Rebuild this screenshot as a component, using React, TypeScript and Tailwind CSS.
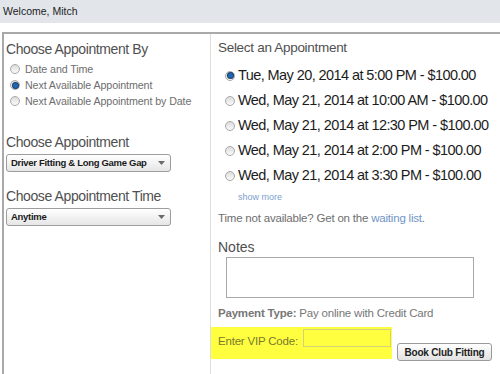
const sans = { fontFamily: '"Liberation Sans", Arial, sans-serif' };

function Radio({ checked = false }: { checked?: boolean }) {
  return (
    <span className="w-[10px] h-[10px] rounded-full border border-[#a8a8a8] bg-gradient-to-b from-[#dcdcdc] to-[#fafafa] flex items-center justify-center shrink-0">
      {checked && <span className="w-[5px] h-[5px] rounded-full bg-[#1f66b3] ring-1 ring-[#1a3f6a]" />}
    </span>
  );
}

function Select({ label }: { label: string }) {
  return (
    <div className="ml-[2px] w-[165px] h-[18px] border border-[#9d9d9d] rounded-[3px] bg-gradient-to-b from-white to-[#e6e6e6] flex items-center justify-between pl-[4px] pr-[5px]">
      <span className="text-[9.5px] font-bold tracking-[-0.3px] text-[#1a1a1a]">{label}</span>
      <svg width="7" height="4" viewBox="0 0 7 4">
        <path d="M0 0h7L3.5 4z" fill="#6b6b6b" />
      </svg>
    </div>
  );
}

const slots = [
  'Tue, May 20, 2014 at 5:00 PM - $100.00',
  'Wed, May 21, 2014 at 10:00 AM - $100.00',
  'Wed, May 21, 2014 at 12:30 PM - $100.00',
  'Wed, May 21, 2014 at 2:00 PM - $100.00',
  'Wed, May 21, 2014 at 3:30 PM - $100.00',
];

export default function App() {
  return (
    <div className="w-[500px] h-[374px] bg-white overflow-hidden" style={sans}>
      <div className="h-[23px] bg-[#e2e6eb] pl-[3px] flex items-center text-[10.5px] text-[#222]">
        Welcome, Mitch
      </div>

      <div className="mt-[9px] ml-[2px] h-[400px] border-t-2 border-l-2 border-[#a9a9a9] flex">
        {/* left column */}
        <div className="w-[207px] border-r border-[#dedede] flex flex-col">
          <div className="mt-[6px] ml-[2px] h-[18px] leading-[18px] text-[14px] tracking-[-0.4px] text-[#505050]">
            Choose Appointment By
          </div>
          <div className="mt-[3px] flex flex-col text-[10.7px] tracking-[-0.1px] text-[#6e6e6e]">
            {['Date and Time', 'Next Available Appointment', 'Next Available Appointment by Date'].map((t, i) => (
              <div key={t} className="h-[16px] flex items-center gap-[5px] pl-[6px]">
                <Radio checked={i === 1} />
                <span>{t}</span>
              </div>
            ))}
          </div>
          <div className="mt-[24px] ml-[2px] h-[18px] leading-[18px] text-[14px] tracking-[-0.4px] text-[#505050]">
            Choose Appointment
          </div>
          <div className="mt-[3px]">
            <Select label="Driver Fitting & Long Game Gap" />
          </div>
          <div className="mt-[15px] ml-[2px] h-[18px] leading-[18px] text-[14px] tracking-[-0.4px] text-[#505050]">
            Choose Appointment Time
          </div>
          <div className="mt-[3px]">
            <Select label="Anytime" />
          </div>
        </div>

        {/* right column */}
        <div className="flex-1 flex flex-col">
          <div className="mt-[5px] pl-[7px] h-[18px] leading-[18px] text-[13.5px] tracking-[-0.3px] text-[#505050]">
            Select an Appointment
          </div>
          <div className="mt-[6px] flex flex-col">
            {slots.map((s, i) => (
              <div key={s} className="h-[25px] flex items-center gap-[3px] pl-[14px]">
                <Radio checked={i === 0} />
                <span className="text-[14.5px] tracking-[-0.58px] text-[#1c1c1c]">{s}</span>
              </div>
            ))}
          </div>
          <div className="mt-[3px] pl-[27px] h-[12px] leading-[12px] text-[9px] text-[#7d9fcf]">show more</div>
          <div className="mt-[8px] pl-[7px] h-[14px] leading-[14px] text-[11.5px] tracking-[-0.2px] text-[#6e6e6e]">
            Time not available? Get on the <span className="text-[#6f95c6]">waiting list</span>.
          </div>
          <div className="mt-[13px] pl-[7px] h-[18px] leading-[18px] text-[14px] text-[#505050]">Notes</div>
          <div className="mt-[1px] ml-[15px] w-[248px] h-[41px] border border-[#a8a8a8] bg-white" />
          <div className="mt-[8px] pl-[7px] h-[14px] leading-[14px] text-[11.5px] tracking-[-0.2px] text-[#777]">
            <span className="font-bold">Payment Type:</span> Pay online with Credit Card
          </div>
          <div className="mt-[7px] flex items-start">
            <div className="w-[181px] h-[32px] bg-[#ffff40] flex items-start pl-[7px] pt-[2px]">
              <span className="mt-[4px] text-[11.5px] tracking-[-0.2px] text-[#79792c]">Enter VIP Code:</span>
              <div className="ml-[5px] w-[88px] h-[18px] border border-[#d2d27a]" />
            </div>
            <button className="mt-[16px] ml-[5px] w-[95px] h-[18px] border border-[#9a9a9a] rounded-[3px] bg-gradient-to-b from-white to-[#e2e2e2] text-[10px] font-bold tracking-[-0.2px] text-[#222] flex items-center justify-center">
              Book Club Fitting
            </button>
          </div>
        </div>
      </div>
    </div>
  );
}
